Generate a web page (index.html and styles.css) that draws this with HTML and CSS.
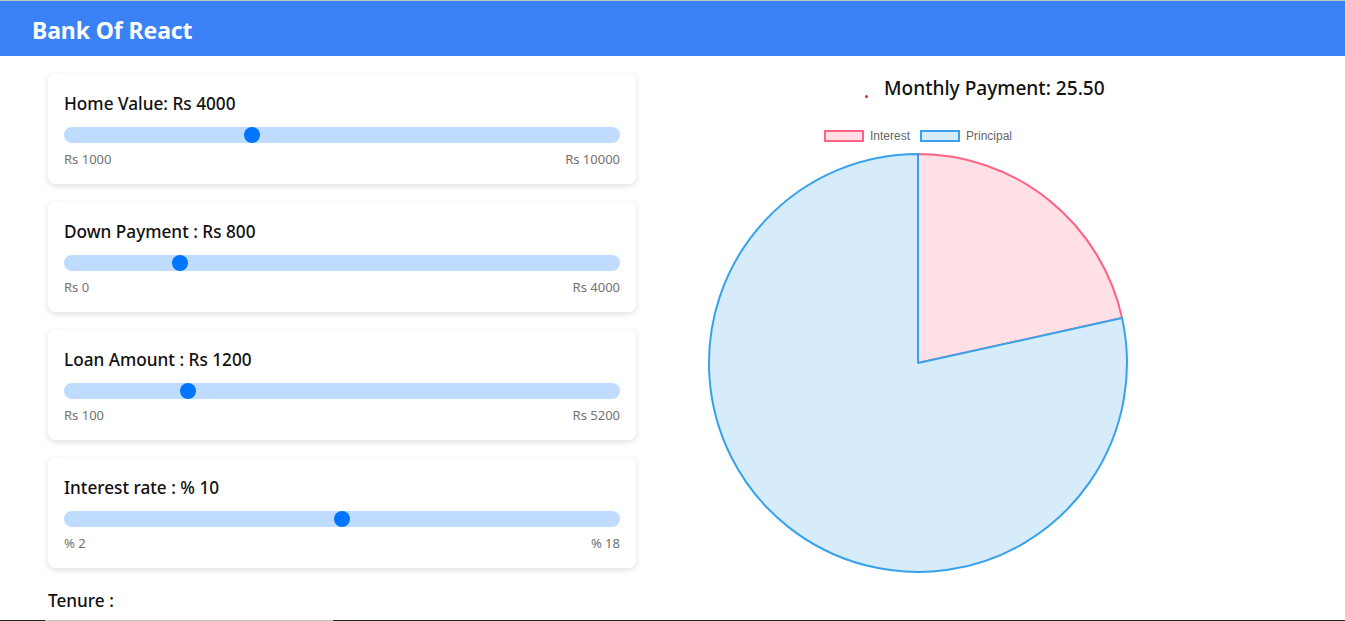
FILE: index.html
```html
<!DOCTYPE html>
<html lang="en">
<head>
<meta charset="utf-8">
<title>Bank Of React</title>
<link rel="stylesheet" href="styles.css">
</head>
<body>
<header class="topbar">
  <h1 class="brand">Bank Of React</h1>
</header>
<main class="page">
  <section class="controls">
    <div class="card">
      <div class="card-title">Home Value: Rs 4000</div>
      <input class="slider" type="range" min="1000" max="10000" value="4000">
      <div class="range-labels"><span>Rs 1000</span><span>Rs 10000</span></div>
    </div>
    <div class="card">
      <div class="card-title">Down Payment : Rs 800</div>
      <input class="slider" type="range" min="0" max="4000" value="800">
      <div class="range-labels"><span>Rs 0</span><span>Rs 4000</span></div>
    </div>
    <div class="card">
      <div class="card-title">Loan Amount : Rs 1200</div>
      <input class="slider" type="range" min="100" max="5200" value="1200">
      <div class="range-labels"><span>Rs 100</span><span>Rs 5200</span></div>
    </div>
    <div class="card">
      <div class="card-title">Interest rate : % 10</div>
      <input class="slider" type="range" min="2" max="18" value="10">
      <div class="range-labels"><span>% 2</span><span>% 18</span></div>
    </div>
    <div class="tenure">Tenure :</div>
  </section>
  <section class="result">
    <div class="payment-row">
      <span class="dot"></span>
      <h2 class="payment">Monthly Payment: 25.50</h2>
    </div>
    <div class="legend">
      <span class="legend-item"><span class="swatch swatch-interest"></span>Interest</span>
      <span class="legend-item"><span class="swatch swatch-principal"></span>Principal</span>
    </div>
    <svg class="pie" width="564" height="440" viewBox="0 0 564 440">
      <path d="M282,219 L282,10 A209,209 0 0 1 486.1,174.1 Z" fill="#ffe0e6" stroke="#ff6384" stroke-width="2" stroke-linejoin="round"/>
      <path d="M282,219 L486.1,174.1 A209,209 0 1 1 282,10 Z" fill="#d7ecfb" stroke="#36a2eb" stroke-width="2" stroke-linejoin="round"/>
    </svg>
  </section>
</main>
<div class="bottom-edge"></div>
</body>
</html>
```
FILE: styles.css
```css
* { box-sizing: border-box; }
html, body { margin: 0; padding: 0; background: #fff; }
body {
  font-family: "Noto Sans", "Open Sans", sans-serif;
  color: #111;
}
.topbar {
  height: 56px;
  border-top: 1px solid #c4c4c4;
  background: #3b82f6;
  display: flex;
  align-items: center;
  padding-left: 32px;
  padding-top: 3px;
}
.brand {
  margin: 0;
  color: #fff;
  font-size: 23px;
  font-weight: 700;
  line-height: 30px;
  letter-spacing: -0.1px;
}
.page {
  display: flex;
  padding-left: 48px;
}
.controls {
  width: 588px;
  padding-top: 18px;
  display: flex;
  flex-direction: column;
  gap: 18px;
}
.card {
  background: #fff;
  border-radius: 7px;
  box-shadow: 0 2px 6px rgba(0,0,0,0.13);
  padding: 18px 16px 16px 16px;
  display: flex;
  flex-direction: column;
}
.card-title {
  font-size: 17.2px;
  font-weight: 500;
  line-height: 24px;
  color: #111;
}
.slider {
  -webkit-appearance: none;
  appearance: none;
  margin: 11px 0 0 0;
  width: 100%;
  height: 16px;
  border-radius: 8px;
  background: #bfdbfe;
  outline: none;
}
.slider::-webkit-slider-thumb {
  -webkit-appearance: none;
  appearance: none;
  width: 16px;
  height: 16px;
  border-radius: 50%;
  background: #0075ff;
  border: none;
}
.range-labels {
  margin-top: 7px;
  display: flex;
  justify-content: space-between;
  font-size: 13px;
  line-height: 18px;
  color: #727272;
}
.tenure {
  margin-top: 3px;
  font-size: 17.2px;
  font-weight: 500;
  line-height: 24px;
}
.result {
  width: 564px;
  padding-top: 18px;
  display: flex;
  flex-direction: column;
}
.payment-row {
  display: flex;
  align-items: center;
  padding-left: 229px;
  height: 28px;
}
.dot {
  width: 3px;
  height: 3px;
  border-radius: 50%;
  background: #e0242a;
  margin-top: 16px;
  margin-right: 16px;
}
.payment {
  margin: 0;
  font-size: 19.1px;
  font-weight: 500;
  line-height: 28px;
  color: #111;
}
.legend {
  margin-top: 26px;
  display: flex;
  justify-content: center;
  gap: 10px;
  font-family: "Liberation Sans", Arial, sans-serif;
  font-size: 12px;
  line-height: 16px;
  color: #666;
}
.legend-item {
  display: flex;
  align-items: center;
}
.swatch {
  width: 40px;
  height: 12px;
  margin-right: 6px;
  border: 2px solid;
}
.swatch-interest { background: #ffe0e6; border-color: #ff6384; }
.swatch-principal { background: #d7ecfb; border-color: #36a2eb; }
.pie { display: block; }
.bottom-edge {
  position: absolute;
  top: 620px;
  left: 0;
  width: 100%;
  height: 1px;
  background: linear-gradient(to right, #1e2b2b 0, #1e2b2b 45px, #c2c2c2 45px, #c2c2c2 333px, #1e2b2b 333px);
}
```
